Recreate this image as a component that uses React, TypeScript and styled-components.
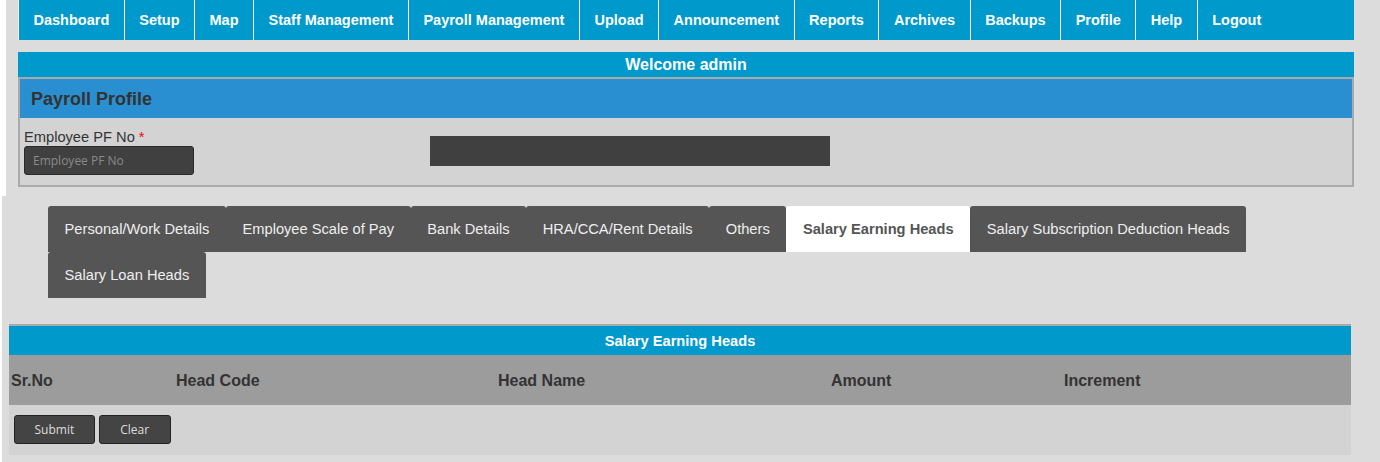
import React from "react";
import styled, { createGlobalStyle } from "styled-components";

const GlobalStyle = createGlobalStyle`
  html, body {
    margin: 0;
    padding: 0;
    background: #ffffff;
    font-family: "Liberation Sans", Arial, sans-serif;
  }
  * { box-sizing: border-box; }
`;

const TopSection = styled.div`
  margin-left: 6px;
  background: #dcdcdc;
  padding: 0 26px 9px 12px;
`;

const NavBar = styled.nav`
  display: flex;
  height: 40px;
  background: #0099cc;
`;

const NavItem = styled.a`
  display: block;
  height: 40px;
  line-height: 40px;
  padding: 0 14.5px;
  border-left: 1px solid #ffffff;
  color: #ffffff;
  font-weight: bold;
  font-size: 14.5px;
  text-decoration: none;
  white-space: nowrap;
`;

const WelcomeBar = styled.div`
  margin-top: 12px;
  height: 25px;
  line-height: 25px;
  background: #0099cc;
  color: #ffffff;
  font-weight: bold;
  font-size: 16px;
  text-align: center;
`;

const ProfileBox = styled.div`
  border: 2px solid #aaaaaa;
  background: #d3d3d3;
`;

const ProfileHeader = styled.div`
  height: 39px;
  line-height: 41px;
  overflow: hidden;
  background: #2a8fd0;
  color: #333333;
  font-weight: bold;
  font-size: 18px;
  padding-left: 11px;
`;

const ProfileBody = styled.div`
  display: grid;
  grid-template-columns: 406px 400px;
  align-items: start;
  padding: 11px 4px 10px 4px;
`;

const Field = styled.div`
  display: flex;
  flex-direction: column;
  align-items: flex-start;
`;

const Label = styled.label`
  font-size: 14.667px;
  line-height: 16px;
  color: #333333;
  margin-bottom: 1px;
`;

const Required = styled.span`
  color: #ff0000;
`;

const TextInput = styled.input`
  width: 170px;
  height: 29px;
  background: #404040;
  border: 1px solid #2a2a2a;
  border-radius: 3px;
  padding: 0 8px;
  font-family: "Open Sans", "Noto Sans", sans-serif;
  font-size: 12px;
  color: #dddddd;
  outline: none;
  &::placeholder {
    color: #8a8a8a;
  }
`;

const DarkField = styled.div`
  margin-top: 7px;
  width: 400px;
  height: 30px;
  background: #404040;
`;

const LowerSection = styled.div`
  margin-left: 2px;
  background: #dcdcdc;
  padding: 10px 29px 10px 7px;
`;

const TabList = styled.div`
  display: flex;
  flex-wrap: wrap;
  padding-left: 39px;
`;

const Tab = styled.div<{ $active?: boolean }>`
  height: 46px;
  line-height: 46px;
  padding: 0 16.6px;
  border-radius: 3px 3px 0 0;
  background: ${(p) => (p.$active ? "#ffffff" : "#555555")};
  color: ${(p) => (p.$active ? "#555555" : "#eeeeee")};
  font-weight: ${(p) => (p.$active ? "bold" : "normal")};
  font-size: 14.667px;
  white-space: nowrap;
  cursor: pointer;
`;

const Table = styled.div`
  margin-top: 26px;
  border-top: 2px solid #aaaaaa;
`;

const Caption = styled.div`
  height: 29px;
  line-height: 31px;
  overflow: hidden;
  background: #0099cc;
  color: #ffffff;
  font-weight: bold;
  font-size: 14.667px;
  text-align: center;
`;

const HeadRow = styled.div`
  display: grid;
  grid-template-columns: 165px 322px 333px 233px 1fr;
  height: 50px;
  align-items: center;
  padding-top: 2px;
  background: #9c9c9c;
`;

const HeadCell = styled.div`
  padding-left: 2px;
  color: #333333;
  font-weight: bold;
  font-size: 16px;
`;

const ActionRow = styled.div`
  display: flex;
  gap: 4px;
  height: 50px;
  padding: 10px 5px;
  background: #d3d3d3;
`;

const Button = styled.button`
  height: 29px;
  min-width: 72px;
  padding: 0 19.5px;
  background: #444444;
  border: 1px solid #222222;
  border-radius: 3px;
  color: #dddddd;
  font-family: "Open Sans", "Noto Sans", sans-serif;
  font-size: 12px;
  cursor: pointer;
`;

const navItems = [
  "Dashboard",
  "Setup",
  "Map",
  "Staff Management",
  "Payroll Management",
  "Upload",
  "Announcement",
  "Reports",
  "Archives",
  "Backups",
  "Profile",
  "Help",
  "Logout",
];

const tabs = [
  "Personal/Work Details",
  "Employee Scale of Pay",
  "Bank Details",
  "HRA/CCA/Rent Details",
  "Others",
  "Salary Earning Heads",
  "Salary Subscription Deduction Heads",
  "Salary Loan Heads",
];

const columns = ["Sr.No", "Head Code", "Head Name", "Amount", "Increment"];

export default function App() {
  return (
    <>
      <GlobalStyle />
      <TopSection>
        <NavBar>
          {navItems.map((n) => (
            <NavItem key={n} href="#">
              {n}
            </NavItem>
          ))}
        </NavBar>
        <WelcomeBar>Welcome admin</WelcomeBar>
        <ProfileBox>
          <ProfileHeader>Payroll Profile</ProfileHeader>
          <ProfileBody>
            <Field>
              <Label>
                Employee PF No <Required>*</Required>
              </Label>
              <TextInput placeholder="Employee PF No" />
            </Field>
            <DarkField />
          </ProfileBody>
        </ProfileBox>
      </TopSection>
      <LowerSection>
        <TabList>
          {tabs.map((t) => (
            <Tab key={t} $active={t === "Salary Earning Heads"}>
              {t}
            </Tab>
          ))}
        </TabList>
        <Table>
          <Caption>Salary Earning Heads</Caption>
          <HeadRow>
            {columns.map((c) => (
              <HeadCell key={c}>{c}</HeadCell>
            ))}
          </HeadRow>
          <ActionRow>
            <Button>Submit</Button>
            <Button>Clear</Button>
          </ActionRow>
        </Table>
      </LowerSection>
    </>
  );
}
